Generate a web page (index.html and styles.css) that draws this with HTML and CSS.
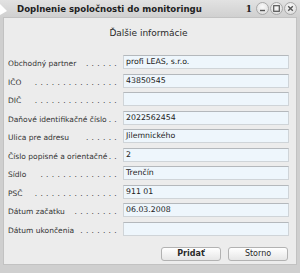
FILE: index.html
```html
<!DOCTYPE html>
<html lang="sk">
<head>
<meta charset="utf-8">
<link rel="stylesheet" href="styles.css">
</head>
<body>
<div class="window">
  <div class="titlebar">
    <svg class="app-icon" width="8" height="14" viewBox="0 0 8 14"><polygon points="0,2 7,9 0,13" fill="#ffffff"/></svg>
    <span class="title">Doplnenie spoločnosti do monitoringu</span>
    <span class="counter">1</span>
    <span class="wbtn"><svg width="13" height="13" viewBox="0 0 13 13"><line x1="4" y1="8.5" x2="9" y2="8.5" stroke="#555" stroke-width="1.4"/></svg></span>
    <span class="wbtn"><svg width="13" height="13" viewBox="0 0 13 13"><rect x="3.7" y="3.7" width="5.6" height="5.6" fill="none" stroke="#555" stroke-width="1.2"/></svg></span>
    <span class="wbtn"><svg width="13" height="13" viewBox="0 0 13 13"><path d="M4.2 4.2 L8.8 8.8 M8.8 4.2 L4.2 8.8" stroke="#555" stroke-width="1.4"/></svg></span>
  </div>
  <div class="panel">
    <div class="heading">Ďalšie informácie</div>
    <div class="form">
      <div class="label"><span class="ltext">Obchodný partner</span><span class="leader">......</span></div>
      <div class="field">profi LEAS, s.r.o.</div>
      <div class="label"><span class="ltext">IČO</span><span class="leader">...............</span></div>
      <div class="field">43850545</div>
      <div class="label"><span class="ltext">DIČ</span><span class="leader">...............</span></div>
      <div class="field"></div>
      <div class="label"><span class="ltext">Daňové identifikačné číslo</span><span class="leader">..</span></div>
      <div class="field">2022562454</div>
      <div class="label"><span class="ltext">Ulica pre adresu</span><span class="leader">......</span></div>
      <div class="field">Jilemnického</div>
      <div class="label"><span class="ltext">Číslo popisné a orientačné</span><span class="leader">..</span></div>
      <div class="field">2</div>
      <div class="label"><span class="ltext">Sídlo</span><span class="leader">..............</span></div>
      <div class="field">Trenčín</div>
      <div class="label"><span class="ltext">PSČ</span><span class="leader">...............</span></div>
      <div class="field">911 01</div>
      <div class="label"><span class="ltext">Dátum začatku</span><span class="leader">........</span></div>
      <div class="field">06.03.2008</div>
      <div class="label"><span class="ltext">Dátum ukončenia</span><span class="leader">.......</span></div>
      <div class="field"></div>
    </div>
    <div class="actions">
      <button class="btn btn-primary">Pridať</button>
      <button class="btn">Storno</button>
    </div>
  </div>
</div>
</body>
</html>
```
FILE: styles.css
```css
html, body {
  margin: 0;
  padding: 0;
  background: #d0d0d0;
}
.window {
  width: 300px;
  height: 273px;
  box-sizing: border-box;
  display: flex;
  flex-direction: column;
  background: #cfcfcf;
  padding: 0 3px 8px 3px;
  font-family: "DejaVu Sans", sans-serif;
  color: #333;
}
.titlebar {
  height: 17px;
  margin: 0 -3px;
  display: flex;
  align-items: center;
  background: linear-gradient(#e2e2e2, #d0d0d0);
  padding-right: 3px;
}
.app-icon {
  flex: none;
  margin-right: 9px;
}
.title {
  font-family: "DejaVu Sans", sans-serif;
  font-weight: bold;
  font-size: 8.6px;
  color: #1e1e1e;
  flex: 1;
  white-space: nowrap;
  padding-top: 1px;
}
.counter {
  font-family: "DejaVu Serif", serif;
  font-weight: bold;
  font-size: 9px;
  color: #222;
  margin-right: 3px;
}
.wbtn {
  width: 13px;
  height: 13px;
  border-radius: 50%;
  box-sizing: border-box;
  border: 1px solid #a8a8a8;
  background: radial-gradient(circle at 50% 35%, #fafafa, #d6d6d6);
  display: flex;
  align-items: center;
  justify-content: center;
  margin-left: 1px;
}
.wbtn svg {
  display: block;
  margin: -1px;
}
.panel {
  flex: 1;
  background: #ececec;
  border: 1px solid #c2c2c2;
  display: flex;
  flex-direction: column;
  padding: 0 7px 0 4px;
}
.heading {
  text-align: center;
  font-size: 9px;
  color: #2a2a2a;
  margin-top: 9px;
  line-height: 12px;
}
.form {
  margin-top: 16px;
  display: grid;
  grid-template-columns: 112px 166px;
  column-gap: 3px;
  row-gap: 4.5px;
  grid-auto-rows: 14px;
}
.label {
  display: flex;
  align-items: flex-end;
  justify-content: space-between;
  font-size: 7.5px;
  line-height: 11px;
  color: #333;
  white-space: nowrap;
  padding-top: 3px;
}
.ltext {
  flex: none;
}
.leader {
  flex: none;
  letter-spacing: 3.3px;
  color: #2e2e2e;
}
.field {
  box-sizing: border-box;
  background: #eef6fc;
  border: 1px solid #cfd4d8;
  border-top-color: #b4b8bc;
  font-size: 7.8px;
  line-height: 12px;
  padding: 0 2px;
  color: #222;
  white-space: nowrap;
  overflow: hidden;
}
.actions {
  display: flex;
  justify-content: flex-end;
  gap: 7px;
  margin-top: 11px;
  padding-right: 1px;
}
.btn {
  width: 60px;
  height: 14px;
  box-sizing: border-box;
  border: 1px solid #b2b2b2;
  border-radius: 3px;
  background: linear-gradient(#ffffff, #e6e6e6);
  font-family: "DejaVu Sans", sans-serif;
  font-size: 8px;
  color: #2a2a2a;
  padding: 0;
  line-height: 12px;
}
.btn-primary {
  font-weight: bold;
}
```
